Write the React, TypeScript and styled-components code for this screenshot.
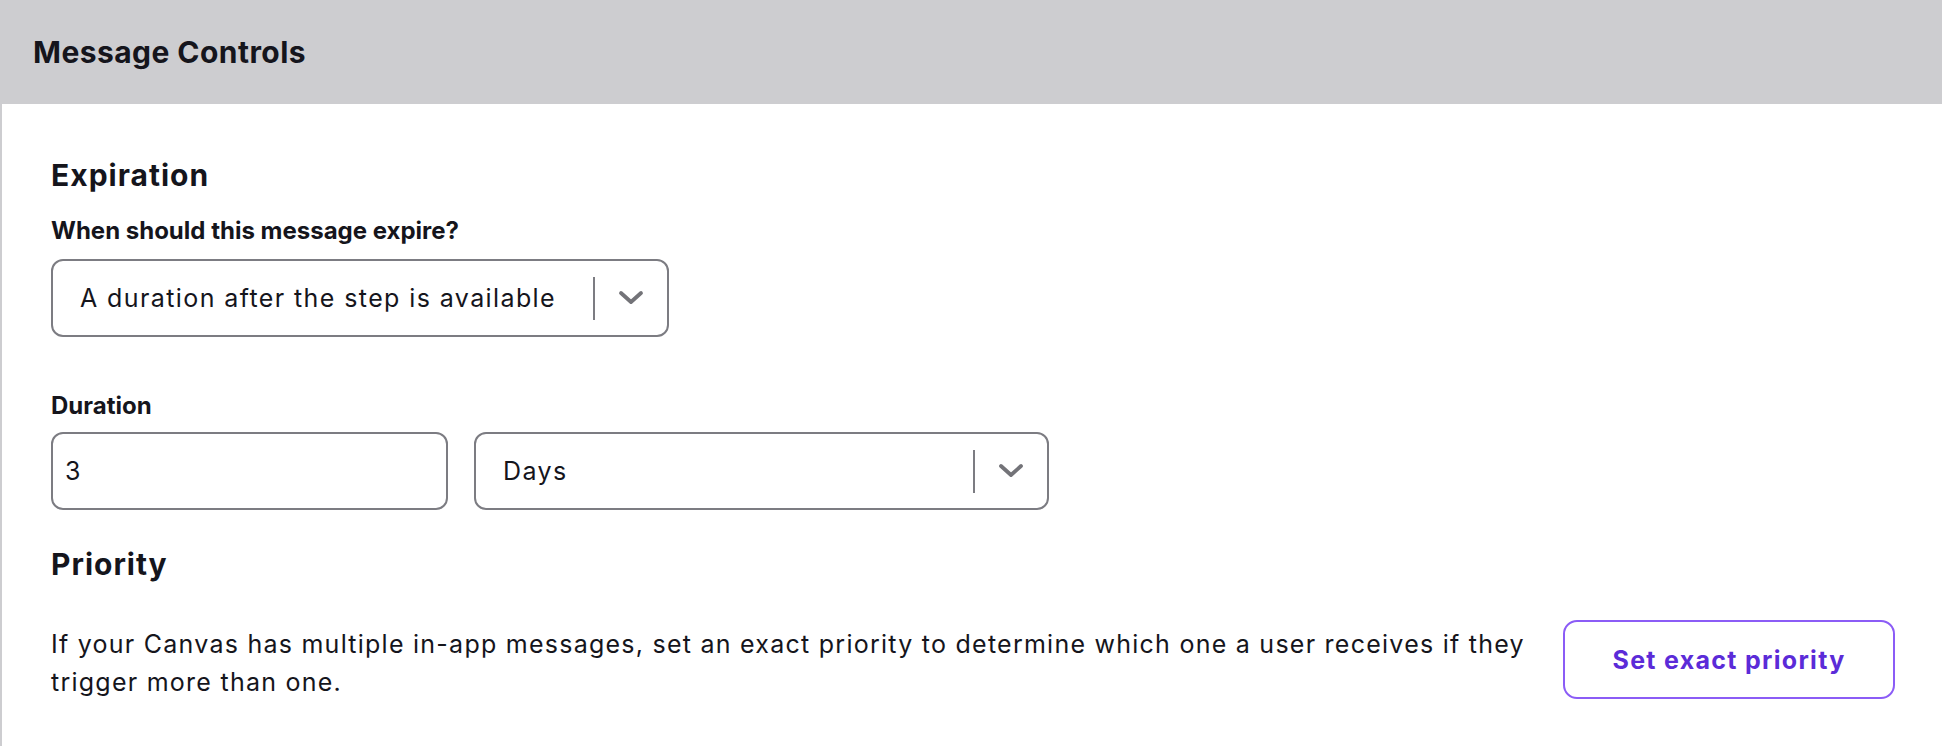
import React from "react";
import styled, { createGlobalStyle } from "styled-components";

const GlobalStyle = createGlobalStyle`
  html, body {
    margin: 0;
    padding: 0;
    background: #ffffff;
  }
  body {
    font-family: Inter, "Noto Sans", "Liberation Sans", sans-serif;
    color: #15151c;
  }
`;

const Panel = styled.div`
  width: 100%;
  min-height: 746px;
  display: flex;
  flex-direction: column;
`;

const Header = styled.div`
  height: 104px;
  background-color: #cdcdd0;
  display: flex;
  align-items: center;
  padding-left: 33px;
  box-sizing: border-box;
`;

const HeaderTitle = styled.h1`
  margin: 0;
  font-size: 30px;
  font-weight: 700;
  letter-spacing: 0.45px;
  line-height: 36px;
  color: #15151c;
`;

const Body = styled.div`
  flex: 1;
  border-left: 2px solid #cdcdd0;
  padding: 54px 47px 0 49px;
  display: flex;
  flex-direction: column;
`;

const SectionTitle = styled.h2<{ $top?: number }>`
  margin: ${(p) => p.$top ?? 0}px 0 0;
  font-size: 30px;
  font-weight: 700;
  letter-spacing: 1px;
  line-height: 34px;
  color: #15151c;
`;

const FieldLabel = styled.label<{ $top: number }>`
  display: block;
  margin-top: ${(p) => p.$top}px;
  font-size: 24px;
  font-weight: 700;
  line-height: 30px;
  color: #15151c;
`;

const FieldRow = styled.div`
  display: flex;
  gap: 26px;
  margin-top: 11px;
`;

const SelectBox = styled.div<{ $width: number; $top?: number }>`
  width: ${(p) => p.$width}px;
  height: 78px;
  margin-top: ${(p) => p.$top ?? 0}px;
  box-sizing: border-box;
  border: 2px solid #7c7c82;
  border-radius: 12px;
  display: flex;
  align-items: center;
  background: #ffffff;
`;

const SelectValue = styled.div`
  flex: 1;
  padding-left: 27px;
  font-size: 25px;
  letter-spacing: 1.4px;
  color: #15151c;
  white-space: nowrap;
`;

const Divider = styled.span`
  width: 2px;
  height: 43px;
  background: #7c7c82;
`;

const Indicator = styled.span`
  width: 72px;
  display: flex;
  align-items: center;
  justify-content: center;
`;

const TextInput = styled.div`
  width: 397px;
  height: 78px;
  box-sizing: border-box;
  border: 2px solid #7c7c82;
  border-radius: 12px;
  display: flex;
  align-items: center;
  padding-left: 12px;
  font-size: 25px;
  letter-spacing: 1.3px;
  color: #15151c;
`;

const PriorityRow = styled.div`
  display: flex;
  align-items: center;
  gap: 32px;
  margin-top: 39px;
`;

const Description = styled.p`
  flex: 1;
  margin: 0;
  font-size: 25px;
  letter-spacing: 1.25px;
  line-height: 38px;
  color: #15151c;
`;

const OutlineButton = styled.button`
  width: 332px;
  height: 79px;
  flex-shrink: 0;
  margin-bottom: 6px;
  box-sizing: border-box;
  border: 2px solid #8b5cf6;
  border-radius: 14px;
  background: #ffffff;
  font-family: inherit;
  font-size: 25px;
  font-weight: 700;
  letter-spacing: 1.3px;
  color: #5b2bd8;
  cursor: pointer;
`;

const Chevron = () => (
  <svg width="26" height="16" viewBox="0 0 26 16" fill="none">
    <path
      d="M3 3 L13 12 L23 3"
      stroke="#737378"
      strokeWidth="3.8"
      strokeLinecap="round"
      strokeLinejoin="round"
    />
  </svg>
);

interface SelectProps {
  value: string;
  width: number;
  top?: number;
}

const Select: React.FC<SelectProps> = ({ value, width, top }) => (
  <SelectBox $width={width} $top={top}>
    <SelectValue>{value}</SelectValue>
    <Divider />
    <Indicator>
      <Chevron />
    </Indicator>
  </SelectBox>
);

const App: React.FC = () => {
  return (
    <>
      <GlobalStyle />
      <Panel>
        <Header>
          <HeaderTitle>Message Controls</HeaderTitle>
        </Header>
        <Body>
          <SectionTitle>Expiration</SectionTitle>
          <FieldLabel $top={24}>When should this message expire?</FieldLabel>
          <Select value="A duration after the step is available" width={618} top={13} />

          <FieldLabel $top={54}>Duration</FieldLabel>
          <FieldRow>
            <TextInput>3</TextInput>
            <Select value="Days" width={575} />
          </FieldRow>

          <SectionTitle $top={37}>Priority</SectionTitle>
          <PriorityRow>
            <Description>
              If your Canvas has multiple in-app messages, set an exact priority
              to determine which one a user receives if they trigger more than
              one.
            </Description>
            <OutlineButton>Set exact priority</OutlineButton>
          </PriorityRow>
        </Body>
      </Panel>
    </>
  );
};

export default App;
